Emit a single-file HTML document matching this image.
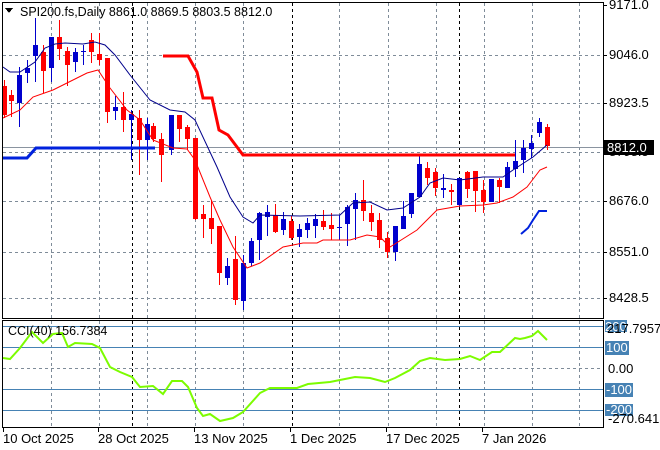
<!DOCTYPE html>
<html><head><meta charset="utf-8"><style>
html,body{margin:0;padding:0;background:#fff;}
svg{display:block;font-family:"Liberation Sans",sans-serif;}
</style></head><body>
<svg id="s" width="660" height="450" viewBox="0 0 660 450" xmlns="http://www.w3.org/2000/svg" shape-rendering="crispEdges">
<rect width="660" height="450" fill="#fff"/>
<g id="grid" stroke="#7f8c99" stroke-dasharray="3,3" stroke-width="1"></g>
<line x1="3" y1="147.5" x2="603" y2="147.5" stroke="#8a94a0"/>
<g id="cci" ></g>
<g id="c"></g>
<polyline fill="none" stroke="#00008b" stroke-width="1" shape-rendering="auto" points="3,67 10,72 20,72 35,62 45,48 55,44 65,43 83,44 95,42 105,45 115,55 130,75 150,100 170,110 185,112 195,120 217,167 230,197 243,217 253,223 260,215 300,216 340,215 353,203 370,202 387,210 403,208 420,197 430,183 443,178 460,180 483,177 503,177 513,170 533,157 547,145"/>
<polyline fill="none" stroke="#ff0000" stroke-width="1" shape-rendering="auto" points="3,118 20,110 33,97 53,90 67,83 87,73 98,70 110,88 127,110 140,120 153,140 173,148 187,149 195,160 210,197 220,220 233,247 247,268 260,263 283,247 303,243 317,243 323,240 350,240 367,235 380,237 390,247 417,230 437,210 460,206 483,205 497,203 513,197 527,187 540,170 547,167"/>
<polyline fill="none" stroke="#ff0000" stroke-width="3" shape-rendering="auto" points="163,56 188,56 197,72 203,98 212,98 219,130 228,135 243,155 515,155"/>
<polyline fill="none" stroke="#0022dd" stroke-width="3" shape-rendering="auto" points="3,158 27,158 36,148 155,148"/>
<polyline fill="none" stroke="#0022dd" stroke-width="2" shape-rendering="auto" points="521,234 528,228 533,220 539,211 547,211"/>
<rect x="2.5" y="2.5" width="601" height="316" fill="none" stroke="#000"/>
<rect x="2.5" y="320.5" width="601" height="107" fill="none" stroke="#000"/>
<g id="ax" stroke="#000"></g>
<path d="M5,8 L13,8 L9,13 Z" fill="#000"/>
<text x="20" y="16" font-size="12.5" fill="#000">SPI200.fs,Daily  8861.0 8869.5 8803.5 8812.0</text>
<text x="8" y="335" font-size="12.5" fill="#000">CCI(40) 156.7384</text>
<g font-size="13" fill="#000">
<text x="609" y="9">9171.0</text>
<text x="609" y="59">9046.0</text>
<text x="609" y="107">8923.5</text>
<text x="609" y="156">8798.5</text>
<text x="609" y="205">8676.0</text>
<text x="609" y="256">8551.0</text>
<text x="609" y="302">8428.5</text>
</g>
<rect x="604" y="140" width="50" height="15" fill="#000"/>
<text x="607" y="152" font-size="13" fill="#fff">8812.0</text>
<g font-size="13">
<rect x="605" y="320" width="22" height="12" fill="#4682b4"/><text x="605" y="331" fill="#fff">200</text>
<text x="607" y="333" fill="#000">217.7957</text>
<rect x="605" y="341" width="24" height="14" fill="#4682b4"/><text x="606" y="352" fill="#fff">100</text>
<text x="608" y="373" fill="#000">0.00</text>
<rect x="605" y="383" width="28" height="14" fill="#4682b4"/><text x="606" y="394" fill="#fff">-100</text>
<rect x="605" y="404" width="28" height="12" fill="#4682b4"/><text x="606" y="414" fill="#fff">-200</text>
<text x="608" y="423" fill="#000">-270.6415</text>
</g>
<g font-size="13" fill="#000">
<text x="3" y="443">10 Oct 2025</text>
<text x="98" y="443">28 Oct 2025</text>
<text x="194" y="443">13 Nov 2025</text>
<text x="290" y="443">1 Dec 2025</text>
<text x="386" y="443">17 Dec 2025</text>
<text x="482" y="443">7 Jan 2026</text>
</g>
</svg>
<script>
var NS="http://www.w3.org/2000/svg";
function el(p,t,a){var e=document.createElementNS(NS,t);for(var k in a)e.setAttribute(k,a[k]);p.appendChild(e);return e;}
var g=document.getElementById('grid');
[51,99,147,195,243,339,388,436,484,532,579].forEach(function(x){el(g,'line',{x1:x+.5,y1:3,x2:x+.5,y2:318});el(g,'line',{x1:x+.5,y1:321,x2:x+.5,y2:427});});
[55,103,152,201,252,298].forEach(function(y){el(g,'line',{x1:3,y1:y+.5,x2:603,y2:y+.5});});
el(g,'line',{x1:3,y1:368.5,x2:603,y2:368.5});
[132,292,459].forEach(function(x){el(g,'line',{x1:x+.5,y1:3,x2:x+.5,y2:318,stroke:'#000'});el(g,'line',{x1:x+.5,y1:321,x2:x+.5,y2:427,stroke:'#000'});});
var cc=document.getElementById('cci');
[326,347,389,410].forEach(function(y){el(cc,'line',{x1:3,y1:y+.5,x2:603,y2:y+.5,stroke:'#4682b4'});});
el(cc,'polyline',{fill:'none',stroke:'#7cfc00','stroke-width':2,'shape-rendering':'auto',points:"3,358 10,359 20,348 32,332 43,343 53,334 62,333 68,347 75,343 92,344 100,348 110,367 120,372 132,377 140,387 153,386 163,394 172,381 182,381 188,387 197,408 203,416 210,414 220,421 233,418 243,412 260,393 270,388 297,388 308,384 330,382 340,380 355,377 370,378 385,382 395,378 410,370 420,361 430,358 445,360 460,359 470,356 480,360 492,352 500,352 515,338 520,339 525,338 532,336 538,331 547,340"});
var R='#ff0000',B='#0000cd';
var C=[[4,86,115,80,118,R],[11,95,101,90,117,R],[19,75,103,67,127,B],[27,68,73,60,83,B],[35,45,56,18,82,B],[43,52,71,45,93,R],[51,37,68,37,82,B],[59,37,49,20,60,R],[67,51,65,47,86,R],[75,52,62,48,72,B],[83,51,52,45,65,B],[91,40,52,33,63,R],[99,54,60,33,65,R],[107,58,112,58,123,R],[115,107,111,96,120,B],[123,107,120,92,132,R],[131,114,120,110,160,B],[139,118,140,110,175,R],[147,124,140,118,160,B],[153,126,139,123,142,R],[161,139,155,133,182,R],[171,115,150,115,155,B],[179,115,129,115,142,R],[187,127,139,125,150,R],[195,138,219,138,220,R],[203,214,219,205,238,R],[211,218,229,200,244,R],[219,226,273,226,285,R],[227,266,278,258,285,B],[235,259,300,236,305,R],[243,263,301,255,310,B],[251,241,263,238,266,B],[259,213,240,212,260,B],[267,212,217,205,236,B],[275,215,232,204,233,R],[283,219,230,212,235,B],[291,221,238,216,240,R],[299,229,237,224,247,B],[307,223,230,218,238,B],[315,219,226,214,238,B],[323,221,227,210,230,R],[331,225,229,213,240,R],[339,227,228,215,240,B],[347,207,224,205,246,B],[355,200,209,193,240,B],[363,200,211,180,221,R],[371,213,222,205,231,R],[379,220,240,213,248,R],[387,238,252,232,258,R],[395,226,252,226,261,B],[403,216,229,201,229,B],[411,193,214,193,218,B],[419,164,197,156,197,B],[427,168,178,162,185,R],[435,172,188,168,196,R],[443,188,190,174,198,B],[451,190,192,184,205,R],[459,178,205,178,207,B],[467,172,189,171,198,R],[475,171,191,171,212,R],[483,190,202,180,213,R],[491,179,202,179,202,B],[499,180,187,178,203,R],[507,167,188,162,188,B],[515,161,169,140,177,B],[523,148,160,140,173,B],[531,143,149,135,158,B],[539,122,133,118,137,B],[547,127,146,124,150,R]];
var cg=document.getElementById('c');
C.forEach(function(c){el(cg,'rect',{x:c[0],y:c[3],width:1,height:c[4]-c[3],fill:c[5]});el(cg,'rect',{x:c[0]-2,y:c[1],width:5,height:Math.max(1,c[2]-c[1]),fill:c[5]});});
var ax=document.getElementById('ax');
[5,55,103,152,201,252,298].forEach(function(y){el(ax,'line',{x1:603,y1:y+.5,x2:607,y2:y+.5});});
[3,98,194,290,386,482].forEach(function(x){el(ax,'line',{x1:x+.5,y1:427,x2:x+.5,y2:432});});
</script>
</body></html>
